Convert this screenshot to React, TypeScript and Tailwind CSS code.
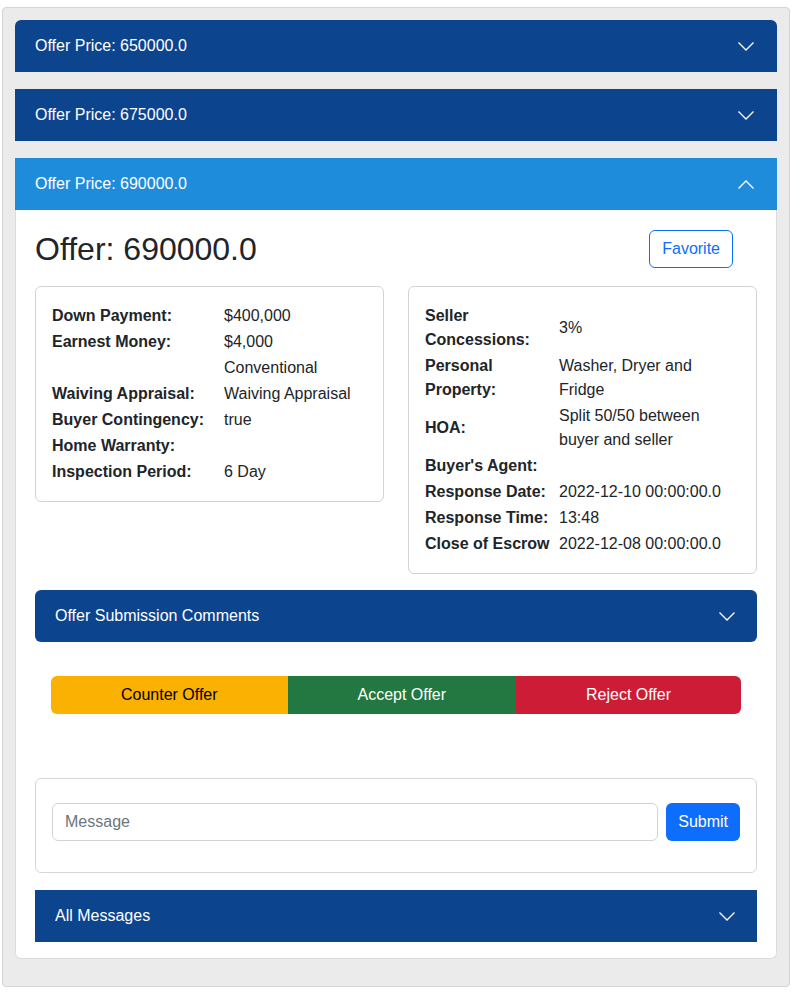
import React from "react";

const Chevron = ({ up = false }: { up?: boolean }) => (
  <svg width="16" height="9" viewBox="0 0 16 9" className="shrink-0">
    <polyline
      points={up ? "0.5,8.5 8,1 15.5,8.5" : "0.5,0.5 8,8 15.5,0.5"}
      fill="none"
      stroke="#ffffff"
      strokeWidth="1.3"
    />
  </svg>
);

const Header = ({
  title,
  className,
  up = false,
}: {
  title: string;
  className: string;
  up?: boolean;
}) => (
  <div
    className={`flex h-[52px] items-center justify-between pl-5 pr-[23px] text-[16px] leading-5 text-white ${className}`}
  >
    <span>{title}</span>
    <Chevron up={up} />
  </div>
);

const Row = ({ label, value }: { label: string; value: string }) => (
  <>
    <div className="py-[1px] font-bold">{label}</div>
    <div className="py-[1px]">{value}</div>
  </>
);

export default function App() {
  return (
    <div
      className="bg-white pl-[2px] pr-[1px] pt-[7px] pb-2 text-[16px] leading-6 text-[#212529]"
      style={{ fontFamily: '"Liberation Sans", Arial, sans-serif' }}
    >
      <div className="rounded-[4px] border border-[#d4d4d4] bg-[#ebebeb] px-3 pt-3 pb-[27px]">
        <Header title="Offer Price: 650000.0" className="rounded-t-md bg-[#0c448e]" />
        <Header title="Offer Price: 675000.0" className="mt-[17px] bg-[#0c448e]" />
        <Header title="Offer Price: 690000.0" className="mt-[17px] bg-[#1f8cdb]" up />

        <div className="rounded-b-md border border-t-0 border-[#dcdcdc] bg-white px-[19px] pt-5 pb-4">
          <div className="flex h-[38px] items-center justify-between">
            <h1 className="text-[32px] leading-[38px] font-normal">Offer: 690000.0</h1>
            <button className="mr-6 h-[38px] rounded-md border border-[#0d6efd] px-3 text-[16px] text-[#0d6efd]">
              Favorite
            </button>
          </div>

          <div className="mt-[18px] grid grid-cols-2 items-start gap-6">
            <div className="rounded-md border border-[#d3d3d3] p-4">
              <div className="grid grid-cols-[172px_1fr] items-center">
                <Row label="Down Payment:" value="$400,000" />
                <Row label="Earnest Money:" value="$4,000" />
                <Row label="" value="Conventional" />
                <Row label="Waiving Appraisal:" value="Waiving Appraisal" />
                <Row label="Buyer Contingency:" value="true" />
                <Row label="Home Warranty:" value="" />
                <Row label="Inspection Period:" value="6 Day" />
              </div>
            </div>
            <div className="rounded-md border border-[#d3d3d3] p-4">
              <div className="grid grid-cols-[134px_1fr] items-center">
                <Row label="Seller Concessions:" value="3%" />
                <Row label="Personal Property:" value="Washer, Dryer and Fridge" />
                <Row label="HOA:" value="Split 50/50 between buyer and seller" />
                <Row label="Buyer's Agent:" value="" />
                <Row label="Response Date:" value="2022-12-10 00:00:00.0" />
                <Row label="Response Time:" value="13:48" />
                <Row label="Close of Escrow" value="2022-12-08 00:00:00.0" />
              </div>
            </div>
          </div>

          <Header
            title="Offer Submission Comments"
            className="mt-4 rounded-md bg-[#0c448e] !pr-[22px]"
          />

          <div className="mx-4 mt-[34px] flex h-[38px]">
            <button className="flex-auto rounded-l-md bg-[#fbb101] px-3 text-black">
              Counter Offer
            </button>
            <button className="flex-auto bg-[#237841] px-3 text-white">Accept Offer</button>
            <button className="flex-auto rounded-r-md bg-[#cc1c36] px-3 text-white">
              Reject Offer
            </button>
          </div>

          <div className="mt-16 rounded-md border border-[#d6d6d6] px-4 pt-6 pb-[31px]">
            <div className="flex gap-2">
              <input
                placeholder="Message"
                className="h-[38px] flex-1 rounded-md border border-[#ced4da] px-3 text-[16px] outline-none placeholder:text-[#6c757d]"
              />
              <button className="h-[38px] rounded-md bg-[#0d6efd] px-3 text-white">Submit</button>
            </div>
          </div>

          <Header title="All Messages" className="mt-[17px] bg-[#0c448e] !pr-[22px]" />
        </div>
      </div>
    </div>
  );
}
